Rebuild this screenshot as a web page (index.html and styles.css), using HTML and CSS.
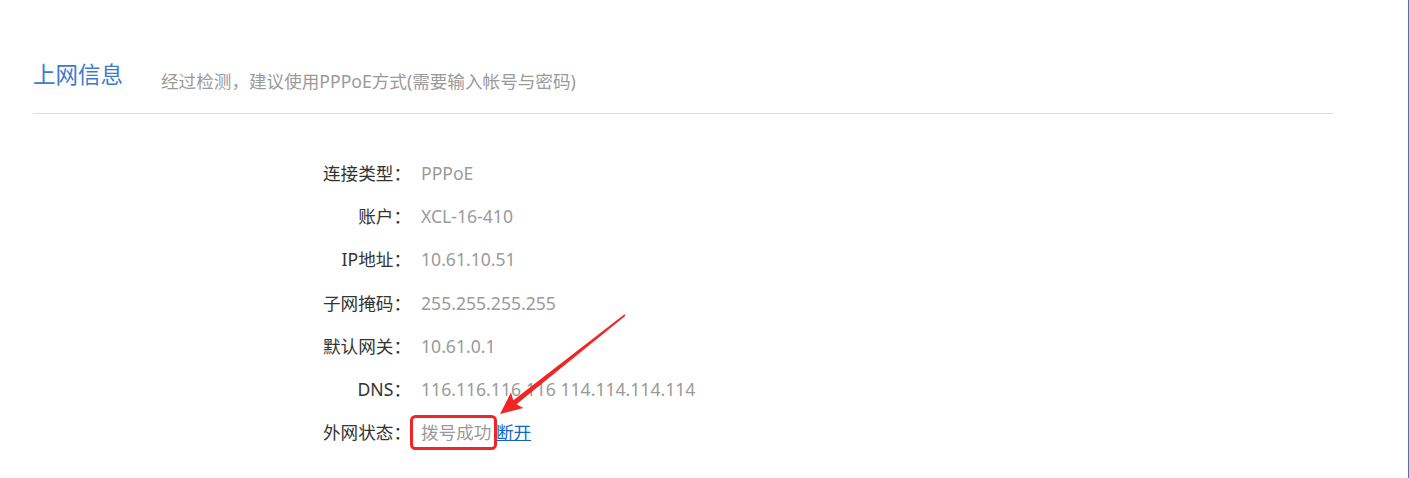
FILE: index.html
```html
<!DOCTYPE html>
<html lang="zh-CN">
<head>
<meta charset="utf-8">
<title>上网信息</title>
<link rel="stylesheet" href="styles.css">
</head>
<body>
<div class="page">
  <div class="content">
    <div class="header">
      <h2 class="title">上网信息</h2>
      <p class="subtitle">经过检测，建议使用PPPoE方式(需要输入帐号与密码)</p>
    </div>
    <div class="info">
      <div class="row"><span class="label">连接类型：</span><span class="value">PPPoE</span></div>
      <div class="row"><span class="label">账户：</span><span class="value">XCL-16-410</span></div>
      <div class="row"><span class="label">IP地址：</span><span class="value">10.61.10.51</span></div>
      <div class="row"><span class="label">子网掩码：</span><span class="value">255.255.255.255</span></div>
      <div class="row"><span class="label">默认网关：</span><span class="value">10.61.0.1</span></div>
      <div class="row"><span class="label">DNS：</span><span class="value">116.116.116.116 114.114.114.114</span></div>
      <div class="row"><span class="label">外网状态：</span><span class="value">拨号成功 <a class="link" href="#">断开</a></span></div>
    </div>
  </div>
  <svg class="annot" width="1409" height="478" viewBox="0 0 1409 478" aria-hidden="true">
    <rect x="411.5" y="416.5" width="84" height="32" rx="4" ry="4" fill="none" stroke="#f02626" stroke-width="3"/>
    <polygon fill="#f02626" points="500,414 523.4,408.1 516.5,404.2 625.5,315.8 624.5,314.2 513.3,400.2 511,392.5"/>
  </svg>
</div>
</body>
</html>
```

FILE: styles.css
```css
html, body {
  margin: 0;
  padding: 0;
  background: #ffffff;
}

body {
  font-family: "Noto Sans", "Noto Sans CJK SC", sans-serif;
  color: #333333;
}

.page {
  position: relative;
  width: 1409px;
  height: 478px;
  box-sizing: border-box;
  border-right: 1px solid #1a84e6;
  overflow: hidden;
}

.content {
  width: 1300px;
  margin-left: 33px;
}

.header {
  display: flex;
  align-items: flex-start;
  padding-top: 58px;
  padding-bottom: 19px;
  border-bottom: 1px solid #dcdcdc;
}

.title {
  margin: 0;
  font-size: 22.5px;
  line-height: 30px;
  font-weight: normal;
  color: #3a7bd0;
  font-family: "Noto Sans CJK SC", sans-serif;
}

.subtitle {
  margin: 10px 0 0 38px;
  font-size: 17.6px;
  line-height: 26px;
  color: #9a9a9a;
}

.info {
  margin-top: 38px;
  display: flex;
  flex-direction: column;
}

.row {
  display: grid;
  grid-template-columns: 378px 1fr;
  column-gap: 10px;
  height: 43.2px;
  line-height: 43.2px;
  font-size: 17.6px;
}

.label {
  text-align: right;
  color: #333333;
  white-space: nowrap;
}

.value {
  color: #9a9a9a;
  white-space: nowrap;
}

.link {
  color: #1565c8;
  text-decoration: underline;
}

.annot {
  position: absolute;
  left: 0;
  top: 0;
  pointer-events: none;
}
```
